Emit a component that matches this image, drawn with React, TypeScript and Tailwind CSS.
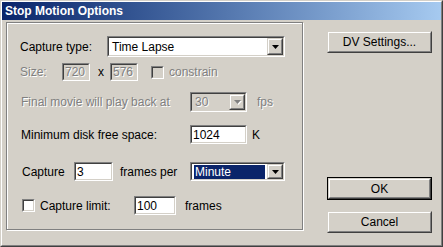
import React from 'react';

type BoxProps = { className?: string; inner?: string; children?: React.ReactNode };

// classic win2k sunken field
const Sunken = ({ className = '', inner = 'bg-white', children }: BoxProps) => (
  <div className={`border border-t-[#808080] border-l-[#808080] border-b-white border-r-white ${className}`}>
    <div className={`flex h-full w-full items-center border border-t-[#404040] border-l-[#404040] border-b-[#d4d0c8] border-r-[#d4d0c8] ${inner}`}>
      {children}
    </div>
  </div>
);

const Raised = ({ className = '', inner = '', children }: BoxProps) => (
  <div className={`border border-t-[#d4d0c8] border-l-[#d4d0c8] border-b-[#404040] border-r-[#404040] ${className}`}>
    <div className={`flex h-full w-full items-center justify-center border border-t-white border-l-white border-b-[#808080] border-r-[#808080] bg-[#d4d0c8] ${inner}`}>
      {children}
    </div>
  </div>
);

const Arrow = ({ disabled = false }: { disabled?: boolean }) => (
  <svg width="7" height="4" viewBox="0 0 7 4" className={disabled ? 'drop-shadow-[1px_1px_0_#fff]' : ''}>
    <polygon points="0,0 7,0 3.5,4" fill={disabled ? '#808080' : '#000'} />
  </svg>
);

const Combo = ({ value, width, disabled = false, selected = false }: { value: string; width: string; disabled?: boolean; selected?: boolean }) => (
  <Sunken className={`${width} h-full`} inner={disabled ? 'bg-[#d4d0c8]' : 'bg-white'}>
    <div className="flex h-full flex-1 items-center px-[2px]">
      {selected ? (
        <span className="flex h-[14px] flex-1 items-center bg-[#0a246a] pl-[1px] text-white">{value}</span>
      ) : (
        <span className={disabled ? 'pl-[1px] text-[#808080] [text-shadow:1px_1px_0_#fff]' : 'pl-[1px]'}>{value}</span>
      )}
    </div>
    <Raised className="h-full w-[16px]">
      <Arrow disabled={disabled} />
    </Raised>
  </Sunken>
);

const CheckBox = ({ disabled = false }: { disabled?: boolean }) => (
  <Sunken className="h-[13px] w-[13px]" inner={disabled ? 'bg-[#d4d0c8]' : 'bg-white'} />
);

const dim = 'text-[#808080] [text-shadow:1px_1px_0_#fff]';

export default function App() {
  return (
    <div className="font-['Liberation_Sans',Arial,sans-serif] text-[12px] leading-none text-black">
      <div className="h-[247px] w-[443px] border border-t-[#d4d0c8] border-l-[#d4d0c8] border-b-[#404040] border-r-[#404040] bg-[#d4d0c8]">
        <div className="flex h-full w-full flex-col border border-t-white border-l-white border-b-[#808080] border-r-[#808080]">
          <div className="flex h-[18px] items-center bg-gradient-to-r from-[#0a246a] to-[#a6caf0] pl-[3px] text-[12px] font-bold text-white">
            Stop Motion Options
          </div>

          <div className="flex">
            {/* options group */}
            <div className="ml-[4px] mt-[2px] h-[208px] w-[297px] border border-[#808080] shadow-[inset_1px_1px_0_#fff,1px_1px_0_#fff]">
              <div className="flex flex-col pl-[13px] pt-[13px]">
                <div className="flex h-[21px] items-center">
                  <div className="w-[87px]">Capture type:</div>
                  <Combo value="Time Lapse" width="w-[178px]" />
                </div>

                <div className="mt-[6px] flex h-[18px] items-center">
                  <div className={`w-[42px] ${dim}`}>Size:</div>
                  <Sunken className="h-full w-[28px]" inner="bg-[#d4d0c8]">
                    <span className={`pl-[1px] ${dim}`}>720</span>
                  </Sunken>
                  <div className="w-[20px] pl-[8px]">x</div>
                  <Sunken className="h-full w-[28px]" inner="bg-[#d4d0c8]">
                    <span className={`pl-[1px] ${dim}`}>576</span>
                  </Sunken>
                  <div className="ml-[13px]">
                    <CheckBox disabled />
                  </div>
                  <div className={`ml-[5px] ${dim}`}>constrain</div>
                </div>

                <div className="mt-[11px] flex h-[20px] items-center">
                  <div className={`w-[170px] pl-[1px] ${dim}`}>Final movie will play back at</div>
                  <Combo value="30" width="w-[57px]" disabled />
                  <div className={`ml-[10px] ${dim}`}>fps</div>
                </div>

                <div className="mt-[13px] flex h-[19px] items-center">
                  <div className="w-[170px] pl-[1px]">Minimum disk free space:</div>
                  <Sunken className="h-full w-[57px]">
                    <span className="pl-[1px]">1024</span>
                  </Sunken>
                  <div className="ml-[5px]">K</div>
                </div>

                <div className="mt-[18px] flex h-[19px] items-center">
                  <div className="w-[54px] pl-[2px]">Capture</div>
                  <Sunken className="h-full w-[39px]">
                    <span className="pl-[1px]">3</span>
                  </Sunken>
                  <div className="w-[77px] pl-[7px]">frames per</div>
                  <Combo value="Minute" width="w-[95px] h-[20px]" selected />
                </div>

                <div className="mt-[15px] flex h-[19px] items-center">
                  <div className="ml-[2px]">
                    <CheckBox />
                  </div>
                  <div className="ml-[5px] w-[94px]">Capture limit:</div>
                  <Sunken className="h-full w-[42px]">
                    <span className="pl-[1px]">100</span>
                  </Sunken>
                  <div className="ml-[9px]">frames</div>
                </div>
              </div>
            </div>

            {/* buttons */}
            <div className="ml-[24px] flex flex-col pt-[11px]">
              <Raised className="h-[22px] w-[105px]">DV Settings...</Raised>
              <div className="mt-[124px] h-[23px] w-[105px] border border-black">
                <Raised className="h-full w-full">OK</Raised>
              </div>
              <Raised className="mt-[11px] h-[22px] w-[105px]">Cancel</Raised>
            </div>
          </div>
        </div>
      </div>
    </div>
  );
}
